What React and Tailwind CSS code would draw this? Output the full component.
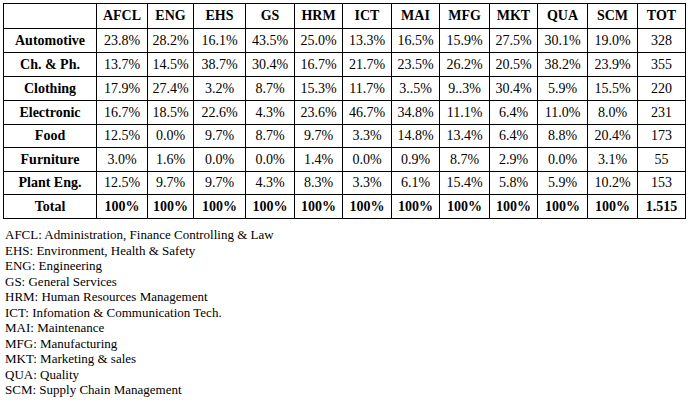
const cols = [
  ['AFCL', 'w-[51px]'],
  ['ENG', 'w-[46px]'],
  ['EHS', 'w-[52px]'],
  ['GS', 'w-[49px]'],
  ['HRM', 'w-[48px]'],
  ['ICT', 'w-[49px]'],
  ['MAI', 'w-[48px]'],
  ['MFG', 'w-[50px]'],
  ['MKT', 'w-[48px]'],
  ['QUA', 'w-[50px]'],
  ['SCM', 'w-[50px]'],
  ['TOT', 'w-[48px]'],
]

const rows = [
  ['h-[24px]', 'Automotive', '23.8%', '28.2%', '16.1%', '43.5%', '25.0%', '13.3%', '16.5%', '15.9%', '27.5%', '30.1%', '19.0%', '328'],
  ['h-[24px]', 'Ch. & Ph.', '13.7%', '14.5%', '38.7%', '30.4%', '16.7%', '21.7%', '23.5%', '26.2%', '20.5%', '38.2%', '23.9%', '355'],
  ['h-[24px]', 'Clothing', '17.9%', '27.4%', '3.2%', '8.7%', '15.3%', '11.7%', '3..5%', '9..3%', '30.4%', '5.9%', '15.5%', '220'],
  ['h-[24px]', 'Electronic', '16.7%', '18.5%', '22.6%', '4.3%', '23.6%', '46.7%', '34.8%', '11.1%', '6.4%', '11.0%', '8.0%', '231'],
  ['h-[23px]', 'Food', '12.5%', '0.0%', '9.7%', '8.7%', '9.7%', '3.3%', '14.8%', '13.4%', '6.4%', '8.8%', '20.4%', '173'],
  ['h-[24px]', 'Furniture', '3.0%', '1.6%', '0.0%', '0.0%', '1.4%', '0.0%', '0.9%', '8.7%', '2.9%', '0.0%', '3.1%', '55'],
  ['h-[23px]', 'Plant Eng.', '12.5%', '9.7%', '9.7%', '4.3%', '8.3%', '3.3%', '6.1%', '15.4%', '5.8%', '5.9%', '10.2%', '153'],
]

const totals = ['100%', '100%', '100%', '100%', '100%', '100%', '100%', '100%', '100%', '100%', '100%', '1.515']

const legend = [
  'AFCL: Administration, Finance Controlling & Law',
  'EHS: Environment, Health & Safety',
  'ENG: Engineering',
  'GS: General Services',
  'HRM: Human Resources Management',
  'ICT: Infomation & Communication Tech.',
  'MAI: Maintenance',
  'MFG: Manufacturing',
  'MKT: Marketing & sales',
  'QUA: Quality',
  'SCM: Supply Chain Management',
]

const cell = "border border-black text-center font-['Liberation_Serif']"

export default function App() {
  return (
    <div className="w-[688px] h-[405px] bg-white text-black font-['Liberation_Serif'] pt-[3px] pl-[3px]">
      <table className="border-collapse table-fixed text-[14px] leading-none font-['Liberation_Serif']">
        <thead>
          <tr className="h-[25px]">
            <th className={`w-[93px] ${cell}`}></th>
            {cols.map(([c, w]) => (
              <th key={c} className={`${w} ${cell} font-bold`}>{c}</th>
            ))}
          </tr>
        </thead>
        <tbody>
          {rows.map(([h, label, ...vals]) => (
            <tr key={label} className={h}>
              <td className={`${cell} font-bold`}>{label}</td>
              {vals.map((v, i) => (
                <td key={i} className={`${cell} font-normal`}>{v}</td>
              ))}
            </tr>
          ))}
          <tr className="h-[24px]">
            <td className={`${cell} font-bold`}>Total</td>
            {totals.map((v, i) => (
              <td key={i} className={`${cell} font-bold`}>{v}</td>
            ))}
          </tr>
        </tbody>
      </table>
      <div className="mt-[8px] pl-[2px] text-[13px] leading-[15.5px] font-['Liberation_Serif']">
        {legend.map((l) => (
          <div key={l}>{l}</div>
        ))}
      </div>
    </div>
  )
}
